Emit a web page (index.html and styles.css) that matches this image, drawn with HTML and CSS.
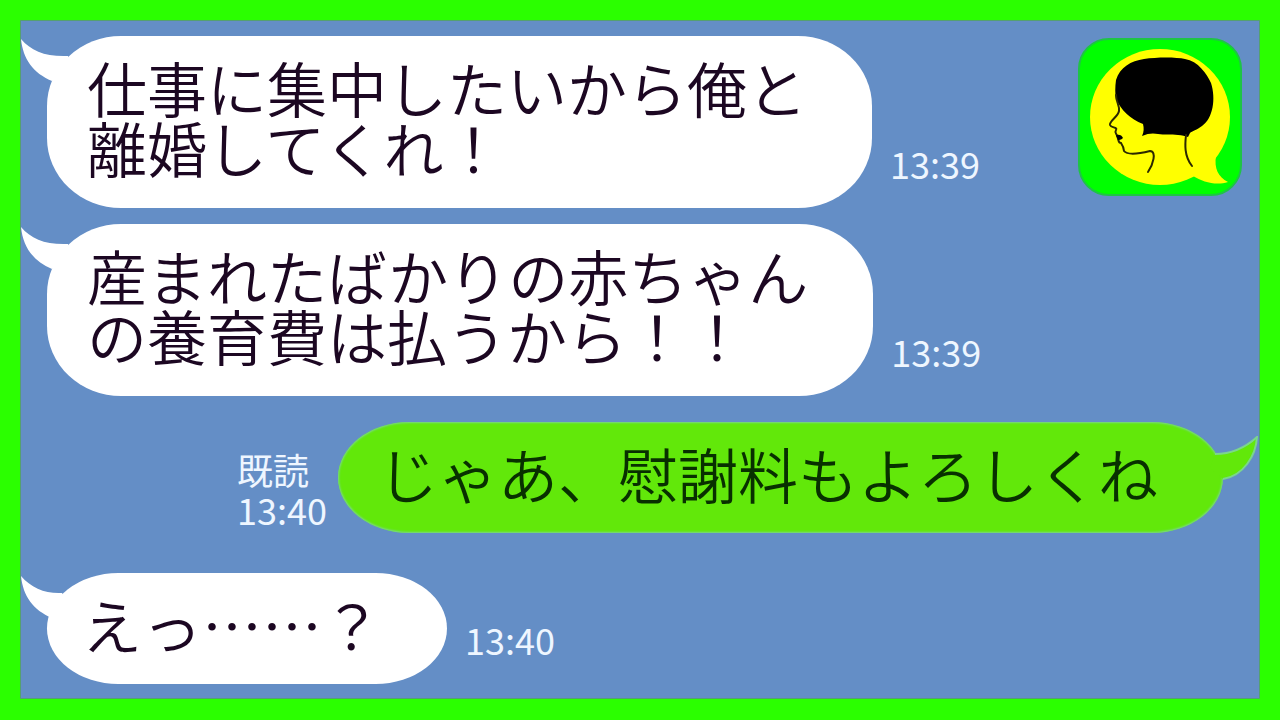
FILE: index.html
```
<!DOCTYPE html>
<html lang="ja">
<head>
    <meta charset="UTF-8">
    <meta name="viewport" content="width=device-width, initial-scale=1">
    <title>トーク</title>
    <link rel="stylesheet" href="styles.css">
</head>
<body>
    <main class="chat">
        <div class="message">
            <div class="bubble two-line">
                <svg class="tail" viewBox="0 0 50 46" aria-hidden="true"><path d="M0 1C10 13 25 19 47 18L50 32L31 43C12 35 2 21 0 1Z"/></svg>
                <p>仕事に集中したいから俺と<br>離婚してくれ！</p>
            </div>
            <div class="info"><time>13:39</time></div>
        </div>
        <div class="message">
            <div class="bubble two-line">
                <svg class="tail" viewBox="0 0 50 46" aria-hidden="true"><path d="M0 1C10 13 25 19 47 18L50 32L31 43C12 35 2 21 0 1Z"/></svg>
                <p>産まれたばかりの赤ちゃん<br>の養育費は払うから！！</p>
            </div>
            <div class="info"><time>13:39</time></div>
        </div>
        <div class="message mine">
            <div class="info">
                <span>既読</span>
                <time>13:40</time>
            </div>
            <div class="bubble">
                <p>じゃあ、慰謝料もよろしくね</p>
                <svg class="tail" viewBox="0 0 50 46" aria-hidden="true"><path d="M7 18C22 18 37 12 49 1C48 20 35 40 15 43L2 32Z"/><path class="rim" d="M7 18C22 18 37 12 49 1C48 20 35 40 15 43"/></svg>
            </div>
        </div>
        <div class="message last">
            <div class="bubble">
                <svg class="tail" viewBox="0 0 50 46" aria-hidden="true"><path d="M0 1C10 13 25 19 41 18L50 32L31 43C12 35 2 21 0 1Z"/></svg>
                <p>えっ……？</p>
            </div>
            <div class="info"><time>13:40</time></div>
        </div>

        <svg class="logo" viewBox="0 0 164 160" role="img" aria-label="横顔のアイコン">
            <rect class="logo-back" x="1" y="2" width="162" height="156" rx="30"/>
            <!-- 吹き出し -->
            <ellipse class="logo-talk" cx="82" cy="80" rx="70" ry="68"/>
            <path class="logo-talk" d="M138 119C136 131 140 140 150 145C138 149 125 145 115 139L108 125Z"/>
            <!-- 髪 -->
            <path d="M38 62C37 57 37 50 38 43C42 30 53 24 66 22C79 20 98 20 107 22C120 24 129 37 133 46C138 62 135 81 124 89C119 93 114 94 112 96L110 100C107 99 104 98 100 98C93 97 86 98 80 97C76 96 70 96 64 99C66 95 66 91 65 87C52 82 43 73 38 62Z"/>
            <!-- 顔の線 -->
            <path class="line" d="M38 58C38 65 42 69 41 74C40 80 31 84 32 88C33 91 40 90 38 93C36 96 39 97 39 99C41 103 40 106 43 106C45 109 46 112 46 114C50 119 64 116 72 114C79 114 75 128 70 135"/>
            <path class="line" d="M108 98C107 107 106 119 114 129"/>
            <path d="M38 98C41 97 44 98 45 101C43 103 41 103 40 103Z"/>
        </svg>
    </main>
</body>
</html>
```
FILE: styles.css
```
* {
    margin: 0;
    padding: 0;
    box-sizing: border-box;
}

body {
    min-height: 100vh;
    padding: 20px 20px 21px;
    display: flex;
    background: #2bff00;
    font-family: "Noto Sans CJK JP", sans-serif;
}

.chat {
    flex: 1;
    position: relative;
    display: flex;
    flex-direction: column;
    align-items: flex-start;
    padding: 15px 36px 13px 26px;
    background: #648ec6;
    border: 1px solid #55a070;
}

.message {
    display: flex;
    align-items: flex-end;
    gap: 18px;
    margin-bottom: 16px;
}

.bubble {
    position: relative;
    padding: 21px 65px 30px 40px;
    background: #fff;
    border-radius: 72px / 56px;
    color: #1c0722;
    font-size: 60px;
    font-weight: 350;
    line-height: 60px;
    white-space: nowrap;
}

.two-line {
    padding-bottom: 31px;
    border-radius: 74px / 70px;
}

.tail {
    position: absolute;
    top: 2px;
    left: -26px;
    width: 50px;
    height: 46px;
    fill: #fff;
}

.info {
    display: flex;
    flex-direction: column;
    padding-bottom: 25px;
    color: #eef6ff;
    font-size: 36px;
    line-height: 40px;
}

/* 自分のメッセージ */
.mine {
    align-self: flex-end;
    gap: 11px;
    margin: 10px 0 40px;
}

.mine .bubble {
    background: #62e80a;
    color: #083000;
    box-shadow: inset 0 0 2px 1px #7bd68c;
}

.mine .info {
    padding-bottom: 4px;
}

.mine .tail {
    top: 14px;
    left: auto;
    right: -35px;
    fill: #62e80a;
}

.rim {
    fill: none;
    stroke: #7bd68c;
    stroke-width: 2;
}

.last {
    margin-bottom: 0;
}

.last .bubble {
    padding-left: 35px;
}

.logo {
    position: absolute;
    top: 16px;
    right: 17px;
    width: 164px;
    height: 160px;
}

.logo-back {
    fill: #00ff00;
    stroke: #1fc445;
    stroke-width: 2;
}

.logo-talk {
    fill: #ffff00;
}

.line {
    fill: none;
    stroke: #2b2800;
    stroke-width: 2;
    stroke-linecap: round;
}
```
